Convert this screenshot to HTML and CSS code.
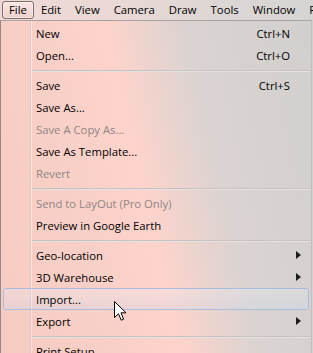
FILE: index.html
```html
<!DOCTYPE html>
<html lang="en">
<head>
    <meta charset="UTF-8">
    <title>SketchUp - File menu</title>
    <link rel="stylesheet" href="styles.css">
</head>
<body>
    <div class="menubar">
        <span class="menubar-item active">File</span>
        <span class="menubar-item">Edit</span>
        <span class="menubar-item">View</span>
        <span class="menubar-item">Camera</span>
        <span class="menubar-item">Draw</span>
        <span class="menubar-item">Tools</span>
        <span class="menubar-item">Window</span>
        <span class="menubar-item">Plugins</span>
    </div>

    <div class="menu">
        <div class="menu-item"><span class="label">New</span><span class="shortcut">Ctrl+N</span><span class="sub"></span></div>
        <div class="menu-item"><span class="label">Open...</span><span class="shortcut">Ctrl+O</span><span class="sub"></span></div>
        <div class="menu-sep"></div>
        <div class="menu-item"><span class="label">Save</span><span class="shortcut">Ctrl+S</span><span class="sub"></span></div>
        <div class="menu-item"><span class="label">Save As...</span><span class="shortcut"></span><span class="sub"></span></div>
        <div class="menu-item disabled"><span class="label">Save A Copy As...</span><span class="shortcut"></span><span class="sub"></span></div>
        <div class="menu-item"><span class="label">Save As Template...</span><span class="shortcut"></span><span class="sub"></span></div>
        <div class="menu-item disabled"><span class="label">Revert</span><span class="shortcut"></span><span class="sub"></span></div>
        <div class="menu-sep"></div>
        <div class="menu-item disabled"><span class="label">Send to LayOut (Pro Only)</span><span class="shortcut"></span><span class="sub"></span></div>
        <div class="menu-item"><span class="label">Preview in Google Earth</span><span class="shortcut"></span><span class="sub"></span></div>
        <div class="menu-sep"></div>
        <div class="menu-item"><span class="label">Geo-location</span><span class="shortcut"></span><span class="sub"><i class="arrow"></i></span></div>
        <div class="menu-item"><span class="label">3D Warehouse</span><span class="shortcut"></span><span class="sub"><i class="arrow"></i></span></div>
        <div class="menu-item hover"><span class="label">Import...</span><span class="shortcut"></span><span class="sub"></span></div>
        <div class="menu-item"><span class="label">Export</span><span class="shortcut"></span><span class="sub"><i class="arrow"></i></span></div>
        <div class="menu-sep"></div>
        <div class="menu-item"><span class="label">Print Setup...</span><span class="shortcut"></span><span class="sub"></span></div>
    </div>

    <!-- mouse pointer over Import... -->
    <svg class="cursor" width="13" height="21" viewBox="0 0 13 21">
        <path d="M0.5 0.5 L0.5 16.5 L4.5 12.8 L7.2 19.2 L9.6 18.2 L7 11.8 L12 11.8 Z" fill="#fff" stroke="#000" stroke-width="1" stroke-linejoin="miter"/>
    </svg>
</body>
</html>
```

FILE: styles.css
```css
* {
    margin: 0;
    padding: 0;
    box-sizing: border-box;
}

body {
    font-family: 'Open Sans', 'Noto Sans', sans-serif;
    font-size: 11.3px;
    color: #000;
    width: 313px;
    height: 353px;
    overflow: hidden;
    position: relative;
    background: linear-gradient(77deg, #f5cbc2 0%, #f9d0c7 30%, #fdd3cb 46%, #dad3d1 66%, #d1cfcd 100%);
}

.menubar {
    height: 20px;
    padding: 1px 0 0 2px;
    display: flex;
    white-space: nowrap;
    overflow: hidden;
    background: linear-gradient(90deg, #efdad6 0%, #e9d8d5 40%, #dcd7d5 70%, #d6d4d3 100%);
}

.menubar-item {
    height: 18px;
    line-height: 16px;
    padding: 0 6px;
    border: 1px solid transparent;
    border-radius: 3px;
}

.menubar-item.active {
    border-color: #7d6c6a;
    background: linear-gradient(180deg, rgba(255, 240, 238, 0.6) 0%, rgba(240, 200, 194, 0.5) 100%);
    box-shadow: inset 0 0 0 1px rgba(255, 255, 255, 0.45);
}

.menu {
    margin-right: 1px;
    padding-top: 1px;
    border: 1px solid #a9a2a1;
    border-left-color: #9a8682;
    border-right-color: #c3bfbe;
    border-bottom: none;
    background: linear-gradient(90deg, transparent 29px, rgba(160, 130, 125, 0.18) 29px, rgba(160, 130, 125, 0.18) 30px, rgba(255, 255, 255, 0.55) 30px, rgba(255, 255, 255, 0.55) 31px, transparent 31px);
}

.menu-item {
    height: 22px;
    margin: 0 2px;
    padding-left: 32px;
    display: grid;
    grid-template-columns: 1fr auto 18px;
    align-items: center;
    border: 1px solid transparent;
    border-radius: 3px;
    white-space: nowrap;
}

.menu-item.disabled {
    color: #8f8684;
}

.menu-item.hover {
    border-color: #a9bedf;
    background: linear-gradient(180deg, rgba(235, 240, 250, 0.28) 0%, rgba(205, 220, 240, 0.32) 100%);
}

.shortcut {
    text-align: right;
}

.sub {
    display: flex;
    align-items: center;
    padding-left: 6px;
}

.arrow {
    width: 0;
    height: 0;
    border-left: 5px solid #1c1c1c;
    border-top: 4px solid transparent;
    border-bottom: 4px solid transparent;
}

.menu-sep {
    height: 1px;
    margin: 4px 1px 2px 31px;
    background: #cbc2c0;
    border-bottom: 1px solid rgba(255, 255, 255, 0.5);
    box-sizing: content-box;
}

.cursor {
    position: absolute;
    left: 114px;
    top: 301px;
}
```
